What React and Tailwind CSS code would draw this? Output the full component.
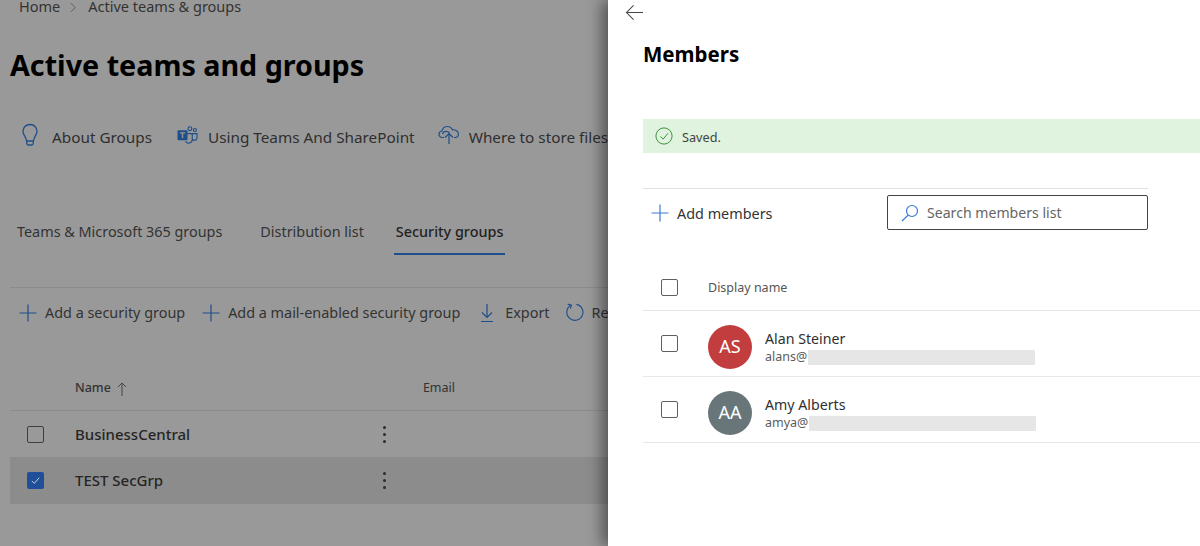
import React from 'react';

function Plus({ className }) {
  return (
    <svg viewBox="0 0 18 18" className={className} fill="none" stroke="currentColor" strokeWidth="1.2">
      <path d="M9 0.5V17.5M0.5 9H17.5" />
    </svg>
  );
}

function Bulb() {
  return (
    <svg viewBox="0 0 18 24" className="w-[18px] h-6 text-[#1f4f8a]" fill="none" stroke="currentColor" strokeWidth="1.3">
      <path d="M9 1.5C4.8 1.5 2 4.6 2 8.2c0 3.6 3 5.4 3.6 9.8h6.8C13 13.6 16 11.8 16 8.2 16 4.6 13.2 1.5 9 1.5Z" />
      <path d="M5.8 18v2.500c0 .9.6 1.500 1.500 1.500h3.400c.9 0 1.500-.6 1.500-1.500V18" />
    </svg>
  );
}

function TeamsIcon() {
  return (
    <svg viewBox="0 0 22 20" className="w-[21px] h-[19px] shrink-0" fill="none">
      <circle cx="13.5" cy="2.8" r="2" stroke="#1f4f8a" strokeWidth="1.2" />
      <circle cx="18.8" cy="4.2" r="1.6" stroke="#1f4f8a" strokeWidth="1.2" />
      <path d="M9 8h7v6.500a3.700 3.700 0 0 1-7 1.500M16.500 8H21v4.500a2.500 2.500 0 0 1-4.500 1.500" stroke="#1f4f8a" strokeWidth="1.2" />
      <rect x="0.5" y="4.5" width="10.5" height="10.5" rx="1" fill="#1f4f8a" />
      <path d="M3 7.200h5.500M5.750 7.200v5.500" stroke="#999999" strokeWidth="1.4" />
    </svg>
  );
}

function CloudIcon() {
  return (
    <svg viewBox="0 0 22 20" className="w-[22px] h-5 text-[#1f4f8a]" fill="none" stroke="currentColor" strokeWidth="1.2">
      <path d="M6 12.500H4.200A3.200 3.200 0 0 1 1 9.300C1 7.500 2.300 6.200 4 6c.6-2.800 2.800-4.500 5.400-4.500 2.300 0 4.200 1.300 5 3.300 3-.4 6 1.500 6 4.500 0 1.900-1.300 3.200-3.200 3.200H16" />
      <path d="M4.500 9c.5-1.600 2-2.700 3.700-2.700 1.500 0 2.600.6 3.300 1.700" />
      <path d="M11 8.500V19M7 12.500l4-4 4 4" />
    </svg>
  );
}

function DownIcon() {
  return (
    <svg viewBox="0 0 14 20" className="w-[14px] h-5 text-[#1f4f8a]" fill="none" stroke="currentColor" strokeWidth="1.2">
      <path d="M7 1v13M2 9.500L7 14.500 12 9.500M1 18.500H13" />
    </svg>
  );
}

function RefreshIcon() {
  return (
    <svg viewBox="0 0 20 20" className="w-[19px] h-[19px] text-[#1f4f8a]" fill="none" stroke="currentColor" strokeWidth="1.2">
      <path d="M6.500 2.200a8.500 8.500 0 1 0 5.500-.8" />
      <path d="M2.800 1.200L6.700 2.200 5.700 6" />
    </svg>
  );
}

function MoreDots() {
  return (
    <div className="flex flex-col items-center gap-[4px] w-1">
      <span className="w-[3px] h-[3px] rounded-full bg-[#2b2b2b]" />
      <span className="w-[3px] h-[3px] rounded-full bg-[#2b2b2b]" />
      <span className="w-[3px] h-[3px] rounded-full bg-[#2b2b2b]" />
    </div>
  );
}

function Box({ dark }) {
  return <span className={`block w-[17px] h-[17px] rounded-[2px] border ${dark ? 'border-[#3f3f3f]' : 'border-[#5f5f5f]'}`} />;
}

function MemberRow({ initials, name, alias, color }) {
  return (
    <div className="flex items-center h-[66px] border-b border-[#e8e8e8]">
      <div className="w-[65px] pl-[18px]"><Box /></div>
      <div className={`w-11 h-11 mt-[6px] rounded-full flex items-center justify-center text-white text-[18px] ${color}`}>{initials}</div>
      <div className="ml-[13px] mt-[7px]">
        <div className="text-[14.2px] leading-5 text-[#2f2f2f]">{name}</div>
        <div className="flex items-center h-[17px] text-[12.5px] text-[#5c5c5c]">
          {alias}
          <span className="ml-px w-[227px] h-[15px] bg-[#e6e6e6]" />
        </div>
      </div>
    </div>
  );
}

export default function App() {
  return (
    <div className="w-[1200px] h-[546px] flex overflow-hidden font-['Noto_Sans','Open_Sans',sans-serif] bg-[#999999]">
      <div className="w-[608px] shrink-0 overflow-hidden pl-[10px] whitespace-nowrap text-[#2b2b2b]">
        <div className="flex items-center h-[14px] pl-[9px] text-[14.5px] text-[#333333] gap-2">
          <span>Home</span>
          <svg viewBox="0 0 8 12" className="w-[7px] h-[11px] ml-[2px] mr-[3px]" fill="none" stroke="#555555"><path d="M1 1l5 5-5 5" /></svg>
          <span>Active teams &amp; groups</span>
        </div>

        <h1 className="mt-[33px] text-[28.7px] leading-9 font-bold text-black">Active teams and groups</h1>

        <div className="mt-[40px] flex items-center h-7 pl-[11px] text-[15.3px] text-[#2f2f2f]">
          <div className="-mt-1"><Bulb /></div>
          <span className="ml-[13px]">About Groups</span>
          <div className="ml-[25px] -mt-1"><TeamsIcon /></div>
          <span className="ml-[10px]">Using Teams And SharePoint</span>
          <div className="ml-[23px] -mt-1"><CloudIcon /></div>
          <span className="ml-[9px]">Where to store files</span>
        </div>

        <div className="mt-[57px] flex h-[46px] pl-[7px] text-[14.4px] text-[#333333]">
          <span className="pt-[13px]">Teams &amp; Microsoft 365 groups</span>
          <span className="pt-[13px] ml-[38px]">Distribution list</span>
          <span className="pt-[13px] ml-[30px] px-[2px] h-[47px] font-medium text-[#222222] border-b-2 border-[#1f4f8a]">Security groups</span>
        </div>

        <div className="mt-[33px] border-t border-[#8b8b8b] flex items-center h-[50px] pl-[9px] text-[14.4px] text-[#333333]">
          <Plus className="w-[18px] h-[18px] shrink-0 text-[#1f4f8a]" />
          <span className="ml-2">Add a security group</span>
          <Plus className="w-[18px] h-[18px] shrink-0 ml-[17px] text-[#1f4f8a]" />
          <span className="ml-2">Add a mail-enabled security group</span>
          <div className="ml-[20px]"><DownIcon /></div>
          <span className="ml-[11px]">Export</span>
          <div className="ml-[15px]"><RefreshIcon /></div>
          <span className="ml-2">Refresh</span>
        </div>

        <div className="mt-[24px] h-[50px] pt-[6px] border-b border-[#8b8b8b] flex items-center text-[12.5px] text-[#333333]">
          <span className="ml-[65px] font-medium">Name</span>
          <svg viewBox="0 0 10 14" className="w-[10px] h-[14px] ml-[6px]" fill="none" stroke="#444444"><path d="M5 14V1M1 5l4-4 4 4" /></svg>
          <span className="ml-[296px]">Email</span>
        </div>

        <div className="flex items-center h-[46px] text-[15px] font-medium text-[#252525]">
          <div className="w-[65px] pl-[17px]"><Box dark /></div>
          <span className="w-[307px]">BusinessCentral</span>
          <MoreDots />
        </div>
        <div className="flex items-center h-[47px] bg-[#8c8c8c] text-[15px] font-medium text-[#252525]">
          <div className="w-[65px] pl-[17px]">
            <span className="flex items-center justify-center w-[17px] h-[17px] rounded-[2px] bg-[#1f4f99]">
              <svg viewBox="0 0 12 12" className="w-[11px] h-[11px]" fill="none" stroke="#d8d8d8"><path d="M2 6.500l2.700 2.700L10 3" /></svg>
            </span>
          </div>
          <span className="w-[307px]">TEST SecGrp</span>
          <MoreDots />
        </div>
      </div>

      <div className="relative flex-1 bg-white pl-[35px] shadow-[-6px_0_14px_rgba(0,0,0,0.45)] text-[#333333]">
        <svg viewBox="0 0 20 18" className="absolute left-[17px] top-[4px] w-[19px] h-[17px]" fill="none" stroke="#444444" strokeWidth="1.1">
          <path d="M19 9H1.500M9 1.500L1.500 9 9 16.500" />
        </svg>

        <h2 className="pt-[39px] text-[20.5px] leading-[30px] font-bold text-black">Members</h2>

        <div className="mt-[50px] h-[34px] bg-[#dff3de] flex items-center pl-3 text-[12.7px] text-[#444444]">
          <svg viewBox="0 0 20 20" className="w-[18px] h-[18px]" fill="none" stroke="#3f9142" strokeWidth="1.1">
            <circle cx="10" cy="10" r="9" />
            <path d="M6 10.500l3 3 5.500-6.500" />
          </svg>
          <span className="ml-[9px] mt-[4px]">Saved.</span>
        </div>

        <div className="mt-[35px] w-[505px] border-t border-[#e1e1e1] flex items-start pt-[6px]">
          <div className="flex items-center h-[36px] pl-2 w-[244px] text-[14.4px]">
            <Plus className="w-[18px] h-[18px] shrink-0 text-[#3a7bd5]" />
            <span className="ml-2 mt-px">Add members</span>
          </div>
          <div className="flex items-center h-[35px] w-[261px] border border-[#444444] rounded-[2px] pl-[13px] text-[14.1px] text-[#666666]">
            <svg viewBox="0 0 18 18" className="w-[18px] h-[18px]" fill="none" stroke="#3a7bd5" strokeWidth="1.2">
              <circle cx="11" cy="7" r="5.500" />
              <path d="M7 11.200L1 17" />
            </svg>
            <span className="ml-[8px] mt-px">Search members list</span>
          </div>
        </div>

        <div className="mt-[30px] flex items-center h-[50px] border-b border-[#e8e8e8] text-[12.5px] text-[#555555]">
          <div className="w-[65px] pl-[18px] mt-[4px]"><Box /></div>
          <span className="mt-[6px]">Display name</span>
        </div>

        <MemberRow initials="AS" name="Alan Steiner" alias="alans@" color="bg-[#c23e3e]" />
        <MemberRow initials="AA" name="Amy Alberts" alias="amya@" color="bg-[#68767a]" />
      </div>
    </div>
  );
}
